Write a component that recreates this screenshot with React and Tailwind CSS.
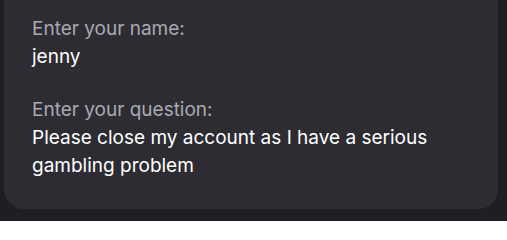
export default function App() {
  return (
    <div
      className="w-[507px] h-[221px] bg-[#1f1e23] overflow-hidden"
      style={{ fontFamily: "Inter, 'Noto Sans', sans-serif" }}
    >
      <div className="ml-[4px] w-[494px] h-[209px] bg-[#2d2c32] rounded-b-[20px] pl-[28px] pt-[15px]">
        <div className="flex flex-col gap-[25px] text-[19px] leading-[28px]">
          <div>
            <p className="text-[#a9a9b1]">Enter your name:</p>
            <p className="text-white">jenny</p>
          </div>
          <div>
            <p className="text-[#a9a9b1]">Enter your question:</p>
            <p className="text-white w-[440px]">
              Please close my account as I have a serious gambling problem
            </p>
          </div>
        </div>
      </div>
    </div>
  )
}
